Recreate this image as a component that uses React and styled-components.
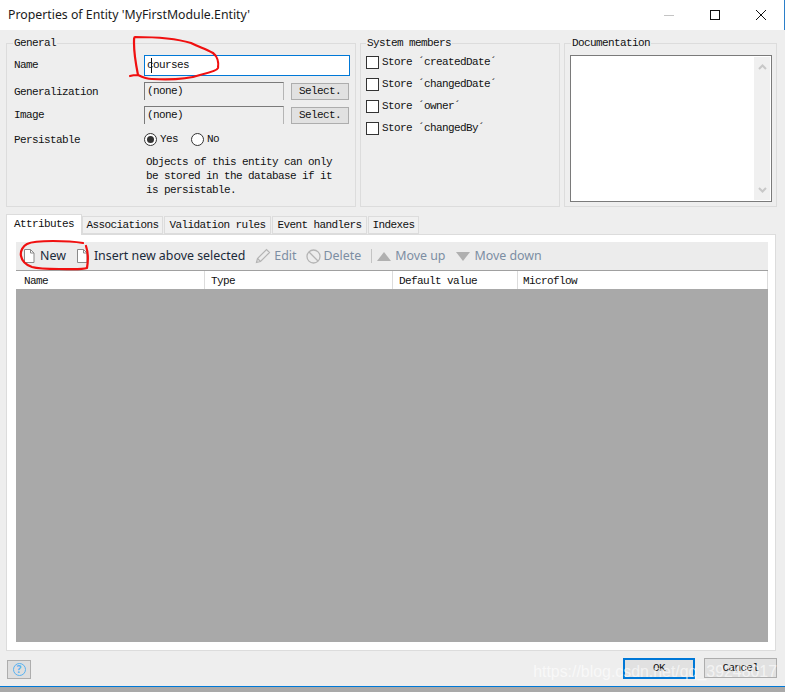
import styled, { createGlobalStyle } from 'styled-components';

const GlobalStyle = createGlobalStyle`
  html, body { margin: 0; padding: 0; background: #a9a9a9; }
`;

const BITMAP = `"Liberation Mono", "DejaVu Sans Mono", monospace`;
const UI = `"Noto Sans", "Open Sans", sans-serif`;

const Window = styled.div`
  position: relative;
  width: 785px;
  height: 692px;
  overflow: hidden;
  display: flex;
  flex-direction: column;
  background: #a9a9a9;
  font: 11px/14px ${BITMAP};
  letter-spacing: -0.6px;
  color: #111;
`;

const TitleBar = styled.div`
  height: 30px;
  flex: none;
  display: flex;
  align-items: center;
  justify-content: space-between;
  background: #fff;
  border-right: 1px solid #2b7fc9;
  padding-left: 8px;
  box-sizing: border-box;
`;

const Title = styled.div`
  font: 12.3px/16px ${UI};
  letter-spacing: 0;
  color: #1a1a1a;
`;

const WindowControls = styled.div`
  display: flex;
  align-items: center;
  gap: 36px;
  padding-right: 18px;
`;

const Body = styled.div`
  height: 656px;
  flex: none;
  display: flex;
  flex-direction: column;
  background: #eee;
`;

const TopRow = styled.div`
  display: flex;
  gap: 4px;
  padding: 6px 0 0 6px;
`;

const Group = styled.fieldset`
  width: ${(p) => p.$width}px;
  height: 171px;
  box-sizing: border-box;
  margin: 0;
  padding: 5px 0 0 7px;
  border: 1px solid #dcdcdc;
`;

const GroupTitle = styled.legend`
  padding: 0 1px;
  margin-left: ${(p) => p.$inset || 0}px;
  height: 14px;
  line-height: 14px;
`;

const FormRow = styled.div`
  display: flex;
  align-items: center;
  height: ${(p) => p.$height}px;
  margin-top: ${(p) => p.$top || 0}px;
`;

const Label = styled.label`
  width: 130px;
  flex: none;
  margin-top: ${(p) => p.$nudge || 0}px;
`;

const NameInput = styled.div`
  width: 206px;
  height: 21px;
  box-sizing: border-box;
  border: 1px solid #0078d7;
  background: #fff;
  padding-left: 2px;
  line-height: 18px;
  position: relative;
`;

const Caret = styled.span`
  position: absolute;
  left: 6px;
  top: 2px;
  width: 1px;
  height: 15px;
  background: #111;
`;

const ReadOnlyField = styled.div`
  width: 140px;
  height: 18px;
  box-sizing: border-box;
  border: 1px solid #7a7a7a;
  border-bottom: 0;
  border-right-color: #b5b5b5;
  padding-left: 2px;
  line-height: 17px;
  background: #eee;
`;

const SelectButton = styled.div`
  width: 58px;
  height: 17px;
  margin-left: 7px;
  box-sizing: border-box;
  border: 1px solid #adadad;
  background: #e1e1e1;
  text-align: center;
  line-height: 14px;
`;

const RadioGroup = styled.div`
  display: flex;
  align-items: center;
`;

const Radio = styled.span`
  width: 13px;
  height: 13px;
  box-sizing: border-box;
  border: 1px solid #333;
  border-radius: 50%;
  background: #fff;
  display: flex;
  align-items: center;
  justify-content: center;
  margin-right: 3px;
  &::after {
    content: '';
    width: 7px;
    height: 7px;
    border-radius: 50%;
    background: ${(p) => (p.$checked ? '#333' : 'transparent')};
  }
`;

const RadioText = styled.span`
  margin-right: ${(p) => p.$gap || 0}px;
`;

const Hint = styled.p`
  margin: 9px 0 0 132px;
  width: 200px;
  line-height: 14px;
`;

const CheckRow = styled.div`
  display: flex;
  align-items: center;
  gap: 3px;
  height: 22px;
  margin-left: -2px;
`;

const CheckList = styled.div`
  margin-top: -4px;
`;

const CheckBox = styled.span`
  width: 13px;
  height: 13px;
  box-sizing: border-box;
  border: 1px solid #333;
  background: #fff;
  flex: none;
`;

const DocBox = styled.div`
  width: 202px;
  height: 147px;
  margin-left: -2px;
  box-sizing: border-box;
  border: 1px solid #7a7a7a;
  background: #fff;
  display: flex;
  justify-content: flex-end;
  padding: 1px;
`;

const ScrollTrack = styled.div`
  width: 16px;
  background: #f0f0f0;
  display: flex;
  flex-direction: column;
  justify-content: space-between;
  align-items: center;
  padding: 7px 0;
`;

const TabBar = styled.div`
  display: flex;
  align-items: flex-end;
  height: 20px;
  margin-top: 7px;
  padding-left: 6px;
  position: relative;
  z-index: 1;
`;

const Tab = styled.div`
  box-sizing: border-box;
  height: ${(p) => (p.$active ? 21 : 18)}px;
  width: ${(p) => p.$width}px;
  margin-bottom: ${(p) => (p.$active ? -1 : 0)}px;
  margin-right: ${(p) => (p.$active ? 0 : 1)}px;
  border: 1px solid #dcdcdc;
  border-bottom: ${(p) => (p.$active ? '0' : '1px solid #dcdcdc')};
  background: ${(p) => (p.$active ? '#fff' : '#f0f0f0')};
  text-align: center;
  line-height: ${(p) => (p.$active ? 18 : 17)}px;
`;

const TabPanel = styled.div`
  width: 770px;
  height: 417px;
  margin-left: 6px;
  box-sizing: border-box;
  border: 1px solid #dcdcdc;
  background: #fff;
  padding: 7px 7px 8px 9px;
  display: flex;
  flex-direction: column;
`;

const Toolbar = styled.div`
  height: 29px;
  flex: none;
  box-sizing: border-box;
  display: flex;
  align-items: center;
  background: #ececec;
  border-bottom: 1px solid #a0a0a0;
  padding-left: 6px;
  font: 12.4px/18px ${UI};
  letter-spacing: 0;
`;

const ToolItem = styled.div`
  display: flex;
  align-items: center;
  gap: ${(p) => p.$gap ?? 4}px;
  margin-right: ${(p) => p.$right || 0}px;
  color: ${(p) => (p.$disabled ? '#7c8ea3' : '#1b2a3a')};
`;

const ToolSeparator = styled.span`
  width: 1px;
  height: 14px;
  background: #c4c4c4;
  margin-right: 5px;
`;

const ListHeader = styled.div`
  height: 18px;
  flex: none;
  display: grid;
  grid-template-columns: 189px 188px 125px 1fr;
  background: #fff;
`;

const HeaderCell = styled.div`
  box-sizing: border-box;
  padding-left: ${(p) => p.$pad}px;
  border-right: 1px solid #dcdcdc;
  line-height: 20px;
`;

const ListBody = styled.div`
  flex: 1;
  background: #a9a9a9;
`;

const Footer = styled.div`
  flex: 1;
  display: flex;
  align-items: flex-start;
  justify-content: space-between;
  padding: 7px 8px 0 7px;
`;

const HelpButton = styled.div`
  width: 24px;
  height: 19px;
  margin-top: 2px;
  box-sizing: border-box;
  border: 1px solid #adadad;
  background: #dedede;
  color: #57b2f2;
  font: bold 12px/17px ${UI};
  letter-spacing: 0;
  display: flex;
  align-items: center;
  justify-content: center;
`;

const HelpRing = styled.span`
  width: 13px;
  height: 13px;
  box-sizing: border-box;
  border: 1px solid #57b2f2;
  border-radius: 50%;
  display: flex;
  align-items: center;
  justify-content: center;
  font-size: 10px;
`;

const FooterActions = styled.div`
  display: flex;
  gap: 9px;
`;

const DialogButton = styled.div`
  width: ${(p) => p.$width}px;
  height: ${(p) => (p.$primary ? 21 : 20)}px;
  box-sizing: border-box;
  border: ${(p) => (p.$primary ? '2px solid #0078d7' : '1px solid #adadad')};
  background: #e1e1e1;
  text-align: center;
  line-height: ${(p) => (p.$primary ? 17 : 19)}px;
`;

const BottomEdge = styled.div`
  height: 1px;
  flex: none;
  background: #0078d7;
`;

const Watermark = styled.div`
  position: absolute;
  right: 8px;
  top: 660px;
  font: 15.9px/24px "Liberation Sans", sans-serif;
  letter-spacing: 0;
  color: rgba(255, 255, 255, 0.62);
  white-space: nowrap;
  pointer-events: none;
`;

const Scribbles = styled.svg`
  position: absolute;
  left: 0;
  top: 0;
  pointer-events: none;
`;

const PageIcon = () => (
  <svg width="14" height="16" viewBox="0 0 14 16" fill="none" stroke="#8a8a8a" strokeWidth="1">
    <path d="M2.5 1.5h6l3.5 3.5v9.500h-9.500z" fill="#fff" />
    <path d="M8.500 1.500v3.500h3.500" />
  </svg>
);

const PencilIcon = () => (
  <svg width="16" height="16" viewBox="0 0 16 16" fill="none" stroke="#b4b4b4" strokeWidth="1.200">
    <path d="M1.500 14.500l1-4L11.500 1.500l3 3-9 9z" />
    <path d="M2.500 10.500l3 3" />
  </svg>
);

const BanIcon = () => (
  <svg width="15" height="15" viewBox="0 0 15 15" fill="none" stroke="#b4b4b4" strokeWidth="1.300">
    <circle cx="7.500" cy="7.500" r="6.500" />
    <path d="M3 3l9 9" />
  </svg>
);

const Triangle = ({ down }) => (
  <svg width="14" height="9" viewBox="0 0 14 9" fill="#b0b0b0">
    <polygon points={down ? '0,0 14,0 7,9' : '0,9 14,9 7,0'} />
  </svg>
);

const Chevron = ({ down }) => (
  <svg width="9" height="6" viewBox="0 0 9 6" fill="none" stroke="#c8c8c8" strokeWidth="2">
    <path d={down ? 'M1 1l3.500 3.500L8 1' : 'M1 5l3.500-3.500L8 5'} />
  </svg>
);

const App = () => (
  <>
    <GlobalStyle />
    <Window>
      <TitleBar>
        <Title>Properties of Entity 'MyFirstModule.Entity'</Title>
        <WindowControls>
          <svg width="10" height="10" viewBox="0 0 10 10" stroke="#c4c4c4" fill="none">
            <path d="M0 5.500h10" />
          </svg>
          <svg width="10" height="10" viewBox="0 0 10 10" stroke="#111" fill="none">
            <rect x=".5" y=".5" width="9" height="9" />
          </svg>
          <svg width="10" height="10" viewBox="0 0 10 10" stroke="#111" fill="none">
            <path d="M0 0l10 10M10 0L0 10" />
          </svg>
        </WindowControls>
      </TitleBar>

      <Body>
        <TopRow>
          <Group $width={350}>
            <GroupTitle $inset={-1}>General</GroupTitle>
            <FormRow $height={21}>
              <Label $nudge={-2}>Name</Label>
              <NameInput>courses<Caret /></NameInput>
            </FormRow>
            <FormRow $height={18} $top={6}>
              <Label $nudge={2}>Generalization</Label>
              <ReadOnlyField>(none)</ReadOnlyField>
              <SelectButton>Select.</SelectButton>
            </FormRow>
            <FormRow $height={18} $top={6}>
              <Label>Image</Label>
              <ReadOnlyField>(none)</ReadOnlyField>
              <SelectButton>Select.</SelectButton>
            </FormRow>
            <FormRow $height={14} $top={8}>
              <Label $nudge={2}>Persistable</Label>
              <RadioGroup>
                <Radio $checked />
                <RadioText $gap={13}>Yes</RadioText>
                <Radio />
                <RadioText>No</RadioText>
              </RadioGroup>
            </FormRow>
            <Hint>Objects of this entity can only be stored in the database if it is persistable.</Hint>
          </Group>

          <Group $width={200}>
            <GroupTitle $inset={-2}>System members</GroupTitle>
            <CheckList>
              <CheckRow><CheckBox />Store ´createdDate´</CheckRow>
              <CheckRow><CheckBox />Store ´changedDate´</CheckRow>
              <CheckRow><CheckBox />Store ´owner´</CheckRow>
              <CheckRow><CheckBox />Store ´changedBy´</CheckRow>
            </CheckList>
          </Group>

          <Group $width={213}>
            <GroupTitle $inset={-1}>Documentation</GroupTitle>
            <DocBox>
              <ScrollTrack>
                <Chevron />
                <Chevron down />
              </ScrollTrack>
            </DocBox>
          </Group>
        </TopRow>

        <TabBar>
          <Tab $active $width={76}>Attributes</Tab>
          <Tab $width={81}>Associations</Tab>
          <Tab $width={107}>Validation rules</Tab>
          <Tab $width={95}>Event handlers</Tab>
          <Tab $width={51}>Indexes</Tab>
        </TabBar>

        <TabPanel>
          <Toolbar>
            <ToolItem $right={9} $gap={4}><PageIcon />New</ToolItem>
            <ToolItem $right={10} $gap={5}><PageIcon />Insert new above selected</ToolItem>
            <ToolItem $disabled $right={9} $gap={3}><PencilIcon />Edit</ToolItem>
            <ToolItem $disabled $right={10} $gap={3}><BanIcon />Delete</ToolItem>
            <ToolSeparator />
            <ToolItem $disabled $right={11} $gap={4}><Triangle />Move up</ToolItem>
            <ToolItem $disabled $gap={4}><Triangle down />Move down</ToolItem>
          </Toolbar>
          <ListHeader>
            <HeaderCell $pad={8}>Name</HeaderCell>
            <HeaderCell $pad={6}>Type</HeaderCell>
            <HeaderCell $pad={6}>Default value</HeaderCell>
            <HeaderCell $pad={5}>Microflow</HeaderCell>
          </ListHeader>
          <ListBody />
        </TabPanel>

        <Footer>
          <HelpButton><HelpRing>?</HelpRing></HelpButton>
          <FooterActions>
            <DialogButton $primary $width={72}>OK</DialogButton>
            <DialogButton $width={73}>Cancel</DialogButton>
          </FooterActions>
        </Footer>
      </Body>
      <BottomEdge />

      <Watermark>https://blog.csdn.net/qq_39248017</Watermark>

      <Scribbles width="785" height="692" viewBox="0 0 785 692" fill="none" stroke="#f01010" strokeWidth="2.200" strokeLinecap="round" strokeLinejoin="round">
        <path d="M130 76c3-1 6-1 8-1 4 2 8 4 14 4 18 1 36 0 48-4 8-2 17-4 18-7 1-6-1-12-5-15-7-4-14-6-22-10-10-3-30-6-56-6-1 0-1 2-1 6 0 10 2 22 4 32" />
        <path d="M86 246c2 6 2 16 1 22-6 2-18 1-28 1-10 0-20 0-27-2-6-2-10-6-11-11-1-5 2-10 6-12 6-3 16-3 26-3 12 0 24 1 30 2" />
      </Scribbles>
    </Window>
  </>
);

export default App;
